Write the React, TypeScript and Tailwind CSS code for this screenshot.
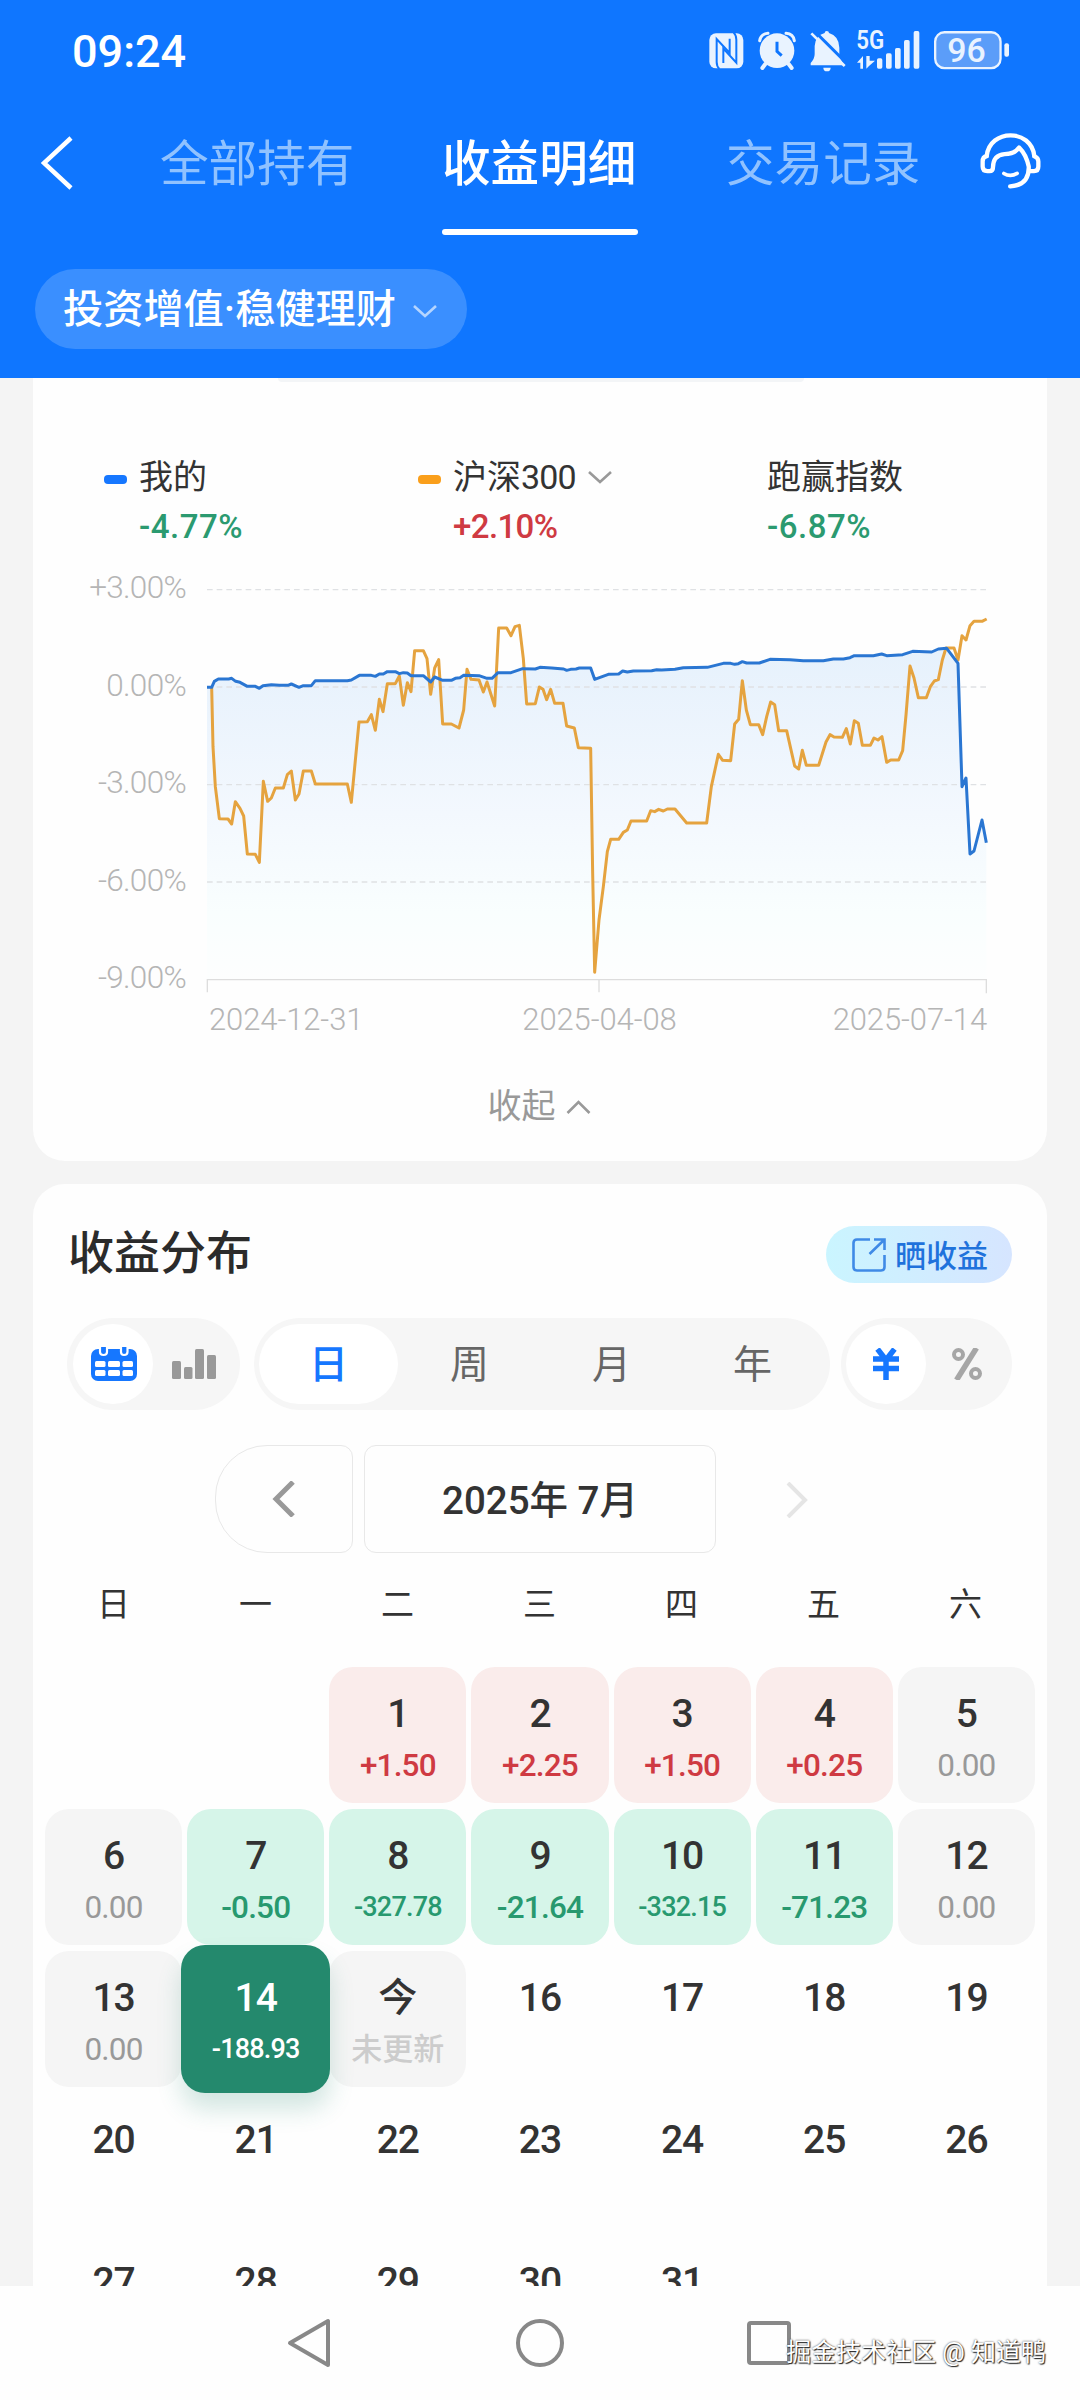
import { ReactNode } from 'react';
import clsx from 'clsx';

type DayKind = 'gain' | 'loss' | 'flat' | 'selected' | 'today' | 'future';

interface Day {
  label: string;
  value?: string;
  kind: DayKind;
}

const weekdays = ['日', '一', '二', '三', '四', '五', '六'];

const days: (Day | null)[] = [
  null,
  null,
  { label: '1', value: '+1.50', kind: 'gain' },
  { label: '2', value: '+2.25', kind: 'gain' },
  { label: '3', value: '+1.50', kind: 'gain' },
  { label: '4', value: '+0.25', kind: 'gain' },
  { label: '5', value: '0.00', kind: 'flat' },
  { label: '6', value: '0.00', kind: 'flat' },
  { label: '7', value: '-0.50', kind: 'loss' },
  { label: '8', value: '-327.78', kind: 'loss' },
  { label: '9', value: '-21.64', kind: 'loss' },
  { label: '10', value: '-332.15', kind: 'loss' },
  { label: '11', value: '-71.23', kind: 'loss' },
  { label: '12', value: '0.00', kind: 'flat' },
  { label: '13', value: '0.00', kind: 'flat' },
  { label: '14', value: '-188.93', kind: 'selected' },
  { label: '今', value: '未更新', kind: 'today' },
  ...Array.from({ length: 16 }, (_, i): Day => ({ label: String(i + 16), kind: 'future' })),
];

const cellStyles: Record<DayKind, string> = {
  gain: 'bg-[#faeceb]',
  loss: 'bg-[#d6f5e9]',
  flat: 'bg-[#f5f5f5]',
  selected: 'relative z-10 -m-[6px] pt-[6px] bg-[#24896d] shadow-[0_16px_24px_rgba(36,137,109,0.2)]',
  today: 'bg-[#f5f5f5]',
  future: '',
};

const valueStyles: Record<DayKind, string> = {
  gain: 'text-[#cf3a42]',
  loss: 'text-[#28996f]',
  flat: 'text-[#999999]',
  selected: 'text-white',
  today: 'text-[#cccccc]',
  future: '',
};

const indexLine =
  '455,381 459,560 466,680 478,776 504,777 515,792 526,725 540,745 551,768 562,882 586,883 598,907 610,664 623,724 634,714 646,684 670,684 682,644 694,633 706,720 717,702 730,633 754,633 766,672 862,672 874,727 897,486 922,485 934,464 946,511 958,418 969,455 982,371 1006,371 1018,348 1030,436 1042,368 1053,395 1064,272 1090,272 1101,296 1112,403 1124,324 1136,299 1148,492 1174,492 1197,504 1211,450 1221,328 1233,358 1257,360 1270,396 1281,366 1304,438 1316,204 1340,204 1353,227 1365,200 1378,196 1390,296 1400,432 1426,431 1438,381 1449,388 1460,419 1472,388 1484,430 1509,430 1520,498 1543,504 1555,563 1592,565 1598,940 1604,1237 1617,1080 1630,980 1642,875 1652,838 1676,838 1690,817 1702,810 1713,783 1760,783 1772,752 1784,755 1796,748 1810,753 1822,747 1845,747 1880,789 1940,789 1954,680 1975,583 1988,601 2012,602 2024,492 2036,478 2047,362 2059,450 2071,494 2096,494 2108,524 2120,470 2132,426 2144,434 2156,512 2180,512 2192,565 2204,618 2216,627 2227,571 2239,616 2276,616 2298,546 2310,524 2322,531 2347,532 2359,506 2371,552 2383,482 2395,490 2407,556 2431,556 2442,534 2454,540 2466,530 2480,607 2492,600 2516,600 2528,572 2538,465 2550,318 2562,354 2575,413 2599,413 2611,380 2623,363 2635,359 2647,300 2658,264 2682,264 2694,300 2706,227 2718,240 2730,197 2742,184 2766,184 2780,177';

const mineLine =
  '441,382 455,382 463,364 475,357 506,357 515,355 527,364 540,367 562,379 586,379 598,385 609,377 634,374 658,376 684,376 694,372 717,382 730,377 754,377 766,362 862,362 874,360 898,346 934,346 946,349 958,342 970,342 982,335 1006,335 1018,341 1030,338 1042,339 1053,347 1090,347 1112,366 1124,351 1148,361 1174,361 1186,355 1200,353 1211,346 1257,347 1281,355 1296,355 1314,338 1353,338 1388,326 1426,327 1440,322 1475,324 1511,327 1520,331 1532,328 1548,327 1558,324 1592,324 1604,358 1645,343 1676,342 1688,333 1702,336 1720,333 1775,332 1790,329 1805,330 1845,328 1870,323 1942,322 1990,310 2012,310 2024,313 2035,311 2047,305 2060,309 2098,309 2130,298 2190,299 2230,302 2290,302 2320,297 2350,297 2370,293 2383,287 2440,287 2465,282 2480,287 2528,284 2558,274 2615,276 2635,267 2660,265 2694,310 2706,680 2718,654 2730,882 2742,873 2766,780 2779,848';

function Chevron({ d, className }: { d: string; className: string }) {
  return (
    <svg viewBox="0 0 24 14" className={className} fill="none" stroke="currentColor" strokeWidth="2.6">
      <path d={d} />
    </svg>
  );
}

function StatusBar() {
  return (
    <div className="flex h-[102px] items-center justify-between pl-[72px] pr-[70px] text-white">
      <span className="text-[45px] font-medium leading-none">09:24</span>
      <div className="flex items-center text-[#e9f3ff]">
        <svg viewBox="86 92 105 126" className="h-[42px] w-[35px]">
          <rect x="87" y="102" width="102" height="105" rx="20" fill="currentColor" />
          <g fill="none" stroke="#0f76ff" strokeWidth="6">
            <path d="M117 209 Q109 201 109 188 V119 L148 161 V118" />
            <path d="M160 100 Q168 108 168 121 V190 L129 148 V191" />
          </g>
        </svg>
        <svg viewBox="232 92 114 126" className="ml-[14px] h-[42px] w-[38px]" fill="none" stroke="currentColor">
          <circle cx="289" cy="154" r="52" fill="currentColor" stroke="none" />
          <path d="M237 124 Q240 104 262 102 M341 124 Q338 104 316 102" strokeWidth="9" strokeLinecap="round" />
          <path d="M254 194 L245 206 M324 194 L333 206" strokeWidth="12" strokeLinecap="round" />
          <path d="M289 127 V156 L303 169" stroke="#0f76ff" strokeWidth="9" />
        </svg>
        <svg viewBox="388 92 108 126" className="ml-[14px] h-[42px] w-[36px]">
          <path
            d="M432 101 Q432 95 438 95 Q445 95 445 101 Q475 110 476 145 V166 Q478 180 488 194 V198 H390 V191 Q402 178 402 164 V140 Q404 108 432 101 Z M428 205 H450 Q450 216 439 216 Q428 216 428 205 Z"
            fill="currentColor"
          />
          <path d="M401 95 L500 194" stroke="#0f76ff" strokeWidth="9" />
          <path d="M392 102 L492 200" stroke="currentColor" strokeWidth="8" />
        </svg>
        <svg viewBox="528 92 189 126" className="ml-[11px] h-[42px] w-[63px] overflow-visible" fill="currentColor">
          <text x="526" y="150" fontSize="76" fontWeight="600" textLength="84" lengthAdjust="spacingAndGlyphs">5G</text>
          <path d="M528 190 L546 170 V208 H538 V190 Z M556 170 V208 L564 200 L582 184 H566 V170 Z" />
          <rect x="588" y="177" width="16" height="31" rx="5" />
          <rect x="615" y="162" width="17" height="46" rx="5" />
          <rect x="642" y="146" width="17" height="62" rx="5" />
          <rect x="669" y="122" width="17" height="86" rx="5" />
          <rect x="698" y="95" width="17" height="113" rx="5" />
        </svg>
        <svg viewBox="760 92 229 126" className="ml-[14px] h-[42px] w-[76px] overflow-visible" fill="currentColor">
          <rect x="763.5" y="98.5" width="197" height="108" rx="28" fill="#5b9df9" stroke="currentColor" strokeWidth="7" />
          <rect x="972" y="132" width="14" height="40" rx="6" />
          <text x="800" y="188" fontSize="102" fontWeight="500" textLength="116" lengthAdjust="spacingAndGlyphs">96</text>
        </svg>
      </div>
    </div>
  );
}

function Header() {
  return (
    <header className="h-[378px] bg-[#0f76ff]">
      <StatusBar />
      <div className="flex h-[133px] items-start pl-[41px] pt-[28px] text-[48.6px] leading-[69px] text-[#90c2ff]">
        <svg viewBox="0 0 32 54" className="mt-[6px] h-[54px] w-[32px] text-white" fill="none" stroke="currentColor" strokeWidth="4.5">
          <path d="M30 2 L3 27 L30 52" />
        </svg>
        <span className="ml-[87px]">全部持有</span>
        <div className="ml-[87.6px] flex h-[105px] flex-col justify-between font-medium text-white">
          <span>收益明细</span>
          <span className="h-[6px] w-[196px] rounded-full bg-white" />
        </div>
        <span className="ml-[88px]">交易记录</span>
        <svg
          viewBox="895 395 196 184"
          className="ml-[58px] h-[61px] w-[65px] text-white"
          fill="none"
          stroke="currentColor"
          strokeWidth="13"
          strokeLinecap="round"
          strokeLinejoin="round"
        >
          <path d="M921 474 C930 390 1056 390 1065 474" />
          <path d="M921 474 Q909 476 909 490 V505 Q909 519 923 519 H930 Q940 519 940 509 C940 480 955 470 975 468 Q1005 468 1019 448 Q1040 468 1048 505 Q1050 562 992 565" />
          <path d="M1065 474 Q1077 478 1077 490 V505 Q1077 519 1064 519 H1050" />
          <path d="M973 526 Q992 538 1013 526" strokeWidth="11" />
        </svg>
      </div>
      <div className="ml-[35px] mt-[34px] flex h-[80px] w-[432px] items-center rounded-full bg-[#3a8fff] pl-[28px] pt-[3px] text-[40.2px] font-medium leading-none text-white">
        <span>投资增值·稳健理财</span>
        <Chevron d="M1 2 L12 12 L23 2" className="ml-[17px] h-[14px] w-[24px] text-[#b5d5ff]" />
      </div>
    </header>
  );
}

function LegendItem({ color, name, value, down }: { color?: string; name: ReactNode; value: string; down?: boolean }) {
  return (
    <div className="flex">
      {color && <span className={clsx('mr-[12px] mt-[21px] h-[9px] w-[23px] rounded-[4px]', color)} />}
      <div>
        <div className="flex h-[46px] items-center whitespace-nowrap text-[34px] leading-none text-[#333333]">{name}</div>
        <div
          className={clsx(
            'mt-[4px] text-[33px] font-medium leading-[46px]',
            down ? 'tracking-[0.5px] text-[#2b9a70]' : 'tracking-[-0.6px] text-[#cf3a42]'
          )}
        >
          {value}
        </div>
      </div>
    </div>
  );
}

function PerformanceCard() {
  return (
    <section className="mx-[33px] h-[783px] rounded-b-[32px] bg-[#fefefe]">
      <div className="ml-[245px] h-[4px] w-[526px] rounded-b-full bg-[#f3f5f7]" />
      <div className="mt-[72px] grid grid-cols-[314px_349px_1fr] pl-[71px]">
        <LegendItem color="bg-[#1677ff]" name="我的" value="-4.77%" down />
        <LegendItem
          color="bg-[#fa9f1b]"
          name={
            <>
              沪深<span className="tracking-[-0.8px]">300</span>
              <Chevron d="M1 2 L12 12 L23 2" className="ml-[12px] h-[14px] w-[24px] text-[#999999]" />
            </>
          }
          value="+2.10%"
        />
        <LegendItem name="跑赢指数" value="-6.87%" down />
      </div>
      <div className="mt-[19px] flex">
        <div className="flex w-[153px] flex-col text-right text-[31.5px] font-light leading-[38px] tracking-[-0.7px] text-[#b5b5b5]">
          <span className="mb-[59.5px]">+3.00%</span>
          <span className="mb-[59.5px]">0.00%</span>
          <span className="mb-[59.5px]">-3.00%</span>
          <span className="mb-[59.5px]">-6.00%</span>
          <span>-9.00%</span>
        </div>
        <div className="ml-[21px] mt-[11px] w-[780px]">
          <svg viewBox="441 60 2340 1260" className="h-[420px] w-[780px] overflow-visible" fill="none">
            <defs>
              <linearGradient id="area" x1="0" y1="265" x2="0" y2="1258" gradientUnits="userSpaceOnUse">
                <stop offset="0" stopColor="#e6f1fc" />
                <stop offset="0.5" stopColor="#f3f8fe" />
                <stop offset="0.8" stopColor="#f9fefe" />
                <stop offset="1" stopColor="#fdfefe" />
              </linearGradient>
            </defs>
            <polygon points={`${mineLine} 2779,1258 441,1258`} fill="url(#area)" />
            {[89, 381, 674, 966].map((y) => (
              <path key={y} d={`M441 ${y} H2779`} stroke="#dfe1e4" strokeWidth="4" strokeDasharray="17 12" />
            ))}
            <path d="M442 1297 V1259 H2779 V1300 M1617 1259 V1297" stroke="#dddddd" strokeWidth="4" />
            <polyline points={indexLine} stroke="#e5a33f" strokeWidth="9" strokeLinejoin="round" />
            <polyline points={mineLine} stroke="#2a76d2" strokeWidth="9" strokeLinejoin="round" />
          </svg>
          <div className="flex justify-between pl-[2px] text-[31px] font-light leading-[40px] tracking-[-0.1px] text-[#b5b5b5]">
            <span>2024-12-31</span>
            <span className="pl-[3px]">2025-04-08</span>
            <span>2025-07-14</span>
          </div>
        </div>
      </div>
      <div className="mt-[46px] flex items-center justify-center text-[34px] leading-[40px] text-[#999999]">
        <span>收起</span>
        <Chevron d="M1 13 L12 2 L23 13" className="ml-[10px] mr-[2px] mt-[2px] h-[14px] w-[25px]" />
      </div>
    </section>
  );
}

function Controls() {
  return (
    <div className="mt-[35px] flex h-[92px] items-center pl-[34px] text-[39px] leading-none text-[#666666]">
      <div className="flex h-full w-[173px] items-center rounded-full bg-[#f6f6f6] pl-[6px]">
        <div className="flex h-[80px] w-[80px] items-center justify-center rounded-full bg-white pl-[2px]">
          <svg viewBox="0 0 46 34" className="h-[34px] w-[46px]">
            <rect x="0" y="2" width="46" height="32" rx="7" fill="#1677ff" />
            <path d="M9 0 V5 Q9 8 12.5 8 Q16 8 16 5 V0 M30 0 V5 Q30 8 33 8 Q36.5 8 36.5 5 V0" fill="#1677ff" stroke="#fff" strokeWidth="2.2" />
            {[14, 23].map((y) =>
              [4, 17, 31.5].map((x) => <rect key={`${x}-${y}`} x={x} y={y} width={x === 17 ? 12 : 10.5} height="6" rx="1.5" fill="#fff" />)
            )}
          </svg>
        </div>
        <svg viewBox="0 0 44 30" className="ml-[19px] h-[30px] w-[44px]" fill="#999999">
          <rect x="0" y="12" width="9" height="18" rx="1.5" />
          <rect x="12" y="18" width="8.5" height="12" rx="1.5" />
          <rect x="23" y="0" width="9" height="30" rx="1.5" />
          <rect x="35" y="6" width="9" height="24" rx="1.5" />
        </svg>
      </div>
      <div className="ml-[14px] flex h-full w-[576px] items-center rounded-full bg-[#f6f6f6] pl-[5px]">
        <span className="flex h-[80px] w-[139px] items-center justify-center rounded-full bg-white pt-[3px] font-medium text-[#1677ff]">日</span>
        <span className="w-[143px] pt-[3px] text-center">周</span>
        <span className="w-[141px] pt-[3px] text-center">月</span>
        <span className="w-[141px] pt-[3px] text-center">年</span>
      </div>
      <div className="ml-[11px] flex h-full w-[171px] items-center rounded-full bg-[#f6f6f6] pl-[5px]">
        <div className="flex h-[80px] w-[80px] items-center justify-center rounded-full bg-white">
          <svg viewBox="0 0 26 32" className="h-[32px] w-[26px]" fill="none" stroke="#1677ff" strokeWidth="5.5">
            <path d="M4.5 1 L13 12 L21.5 1 M13 10 V32 M0 11 H26 M0 20.5 H26" />
          </svg>
        </div>
        <svg viewBox="0 0 30 32" className="ml-[26px] h-[32px] w-[30px]" fill="none" stroke="#a6a6a6" strokeWidth="4">
          <circle cx="6.5" cy="6.5" r="4.5" />
          <circle cx="23.5" cy="25.5" r="4.5" />
          <path d="M24.5 0 L4.5 32" strokeWidth="5.5" />
        </svg>
      </div>
    </div>
  );
}

function MonthNav() {
  return (
    <div className="mt-[35px] flex h-[108px] pl-[182px]">
      <div className="flex w-[138px] items-center justify-center rounded-l-[52px] rounded-r-[12px] border border-[#e8e8e8]">
        <svg viewBox="0 0 24 36" className="h-[36px] w-[24px]" fill="none" stroke="#999999" strokeWidth="5">
          <path d="M21 1 L4 18 L21 35" />
        </svg>
      </div>
      <div className="ml-[11px] flex w-[352px] items-center justify-center rounded-[12px] border border-[#e8e8e8] pt-[4px] text-[38.5px] font-medium leading-none text-[#333333]">
        2025年 7月
      </div>
      <svg viewBox="0 0 24 36" className="ml-[69px] mt-[37px] h-[36px] w-[24px]" fill="none" stroke="#e5e5e5" strokeWidth="4">
        <path d="M3 1 L20 18 L3 35" />
      </svg>
    </div>
  );
}

function DayCell({ day }: { day: Day }) {
  const small = (day.value?.length ?? 0) > 6;
  return (
    <div className={clsx('flex flex-col items-center rounded-[24px]', cellStyles[day.kind])}>
      <span
        className={clsx(
          'mt-[24px] h-[44px] text-[39px] font-medium leading-[47px]',
          day.label === '今' ? '' : 'tracking-[-1px]',
          day.kind === 'selected' ? 'text-white' : 'text-[#333333]'
        )}
      >
        {day.label}
      </span>
      {day.value && (
        <span
          className={clsx(
            'mt-[10px] h-[40px] leading-[41px]',
            day.kind === 'today' ? 'text-[31px]' : 'tracking-[-0.8px]',
            day.kind !== 'today' && (small ? 'text-[27px]' : 'text-[31.5px]'),
            day.kind === 'flat' ? 'font-normal' : 'font-medium',
            valueStyles[day.kind]
          )}
        >
          {day.value}
        </span>
      )}
    </div>
  );
}

function DistributionCard() {
  return (
    <section className="mx-[33px] mt-[23px] h-[1250px] rounded-t-[32px] bg-[#fefefe]">
      <div className="flex items-center justify-between pl-[35px] pr-[35px] pt-[42px]">
        <h2 className="mt-[-4px] text-[46px] font-medium leading-none text-[#2b2b2b]">收益分布</h2>
        <div className="flex h-[57px] w-[186px] items-center rounded-full bg-linear-to-r from-[#caf5ff] to-[#d6e5ff] pl-[26px] text-[31px] font-medium leading-none text-[#1f72dc]">
          <svg viewBox="0 0 34 34" className="mr-[9px] h-[34px] w-[34px]" fill="none" stroke="#3f8ae6" strokeWidth="2.6">
            <path d="M18 1.5 H5 Q1.5 1.5 1.5 5 V29 Q1.5 32.5 5 32.5 H29 Q32.5 32.5 32.5 29 V17" />
            <path d="M22 1.5 H32.5 V12 M32 2 L17.5 16" />
          </svg>
          <span className="pt-[3px]">晒收益</span>
        </div>
      </div>
      <Controls />
      <MonthNav />
      <div className="ml-[12px] mt-[28px] grid w-[989px] grid-cols-7 gap-x-[5px] text-center text-[33px] leading-[48px] text-[#333333]">
        {weekdays.map((w) => (
          <span key={w}>{w}</span>
        ))}
      </div>
      <div className="ml-[12px] mt-[38px] grid w-[990px] auto-rows-[136px] grid-cols-7 gap-x-[5px] gap-y-[6px]">
        {days.map((day, i) => (day ? <DayCell key={day.label} day={day} /> : <div key={`empty-${i}`} />))}
      </div>
    </section>
  );
}

function NavBar() {
  return (
    <nav className="relative h-[114px] bg-[#fefefe]">
      <div className="flex h-full items-center pl-[286px]">
        <svg viewBox="0 0 46 50" className="h-[50px] w-[46px]" fill="none" stroke="#888888" strokeWidth="4" strokeLinejoin="round">
          <path d="M42 3 V47 L4 25 Z" />
        </svg>
        <span className="ml-[184px] h-[48px] w-[48px] rounded-full border-4 border-[#888888]" />
        <span className="ml-[183px] h-[44px] w-[44px] rounded-[4px] border-4 border-[#888888]" />
      </div>
      <span className="absolute right-[34px] top-[49px] whitespace-nowrap text-[25px] leading-[36px] text-white [text-shadow:1px_1px_1px_#222,0_0_2px_#444]">
        掘金技术社区 @ 知道鸭
      </span>
    </nav>
  );
}

export default function App() {
  return (
    <div className="flex h-[2400px] w-[1080px] flex-col overflow-hidden bg-[#f4f4f4] font-['Roboto','Noto_Sans_CJK_SC',sans-serif]">
      <Header />
      <main className="h-[1908px] overflow-hidden">
        <PerformanceCard />
        <DistributionCard />
      </main>
      <NavBar />
    </div>
  );
}
